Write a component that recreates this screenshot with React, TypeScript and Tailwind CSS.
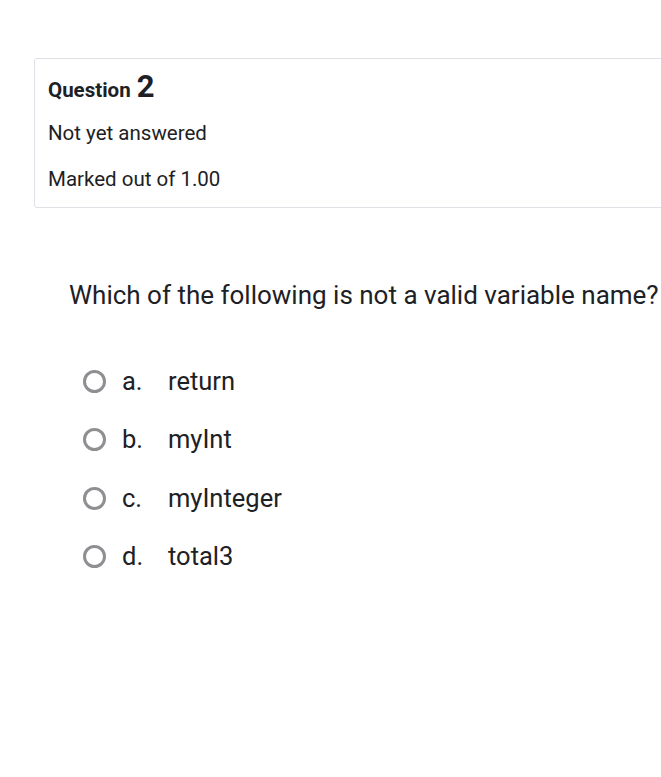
import React from 'react';

const options = [
  { key: 'a.', text: 'return' },
  { key: 'b.', text: 'myInt' },
  { key: 'c.', text: 'myInteger' },
  { key: 'd.', text: 'total3' },
];

function Radio() {
  return <span className="block h-[23px] w-[23px] shrink-0 rounded-full border-[3px] border-[#8e8e93] bg-white" />;
}

export default function App() {
  return (
    <div
      className="h-[777px] w-[661px] overflow-hidden bg-white text-[#1d2125]"
      style={{ fontFamily: 'Roboto, "Noto Sans", sans-serif' }}
    >
      {/* Info box */}
      <div className="ml-[34px] mt-[58px] w-[660px] rounded-[3px] border border-[#dee2e6] bg-white px-[13px] pt-[12px] pb-[16px]">
        <h3 className="flex items-baseline gap-[6px] leading-none">
          <span className="text-[20.5px] font-bold">Question</span>
          <span className="text-[31px] font-bold">2</span>
        </h3>
        <div className="mt-[19px] text-[20.5px] leading-[24px]">Not yet answered</div>
        <div className="mt-[22px] text-[20.5px] leading-[24px]">Marked out of 1.00</div>
      </div>

      {/* Question */}
      <div className="ml-[69px] mt-[71px] whitespace-nowrap text-[26px] leading-[32px]">
        Which of the following is not a valid variable name?
      </div>

      <div className="ml-[83px] mt-[56px] flex flex-col gap-[30.5px]">
        {options.map((o) => (
          <label key={o.key} className="flex h-[28px] items-center text-[25.5px]">
            <Radio />
            <span className="ml-[16px] w-[46px]">{o.key}</span>
            <span>{o.text}</span>
          </label>
        ))}
      </div>
    </div>
  );
}
